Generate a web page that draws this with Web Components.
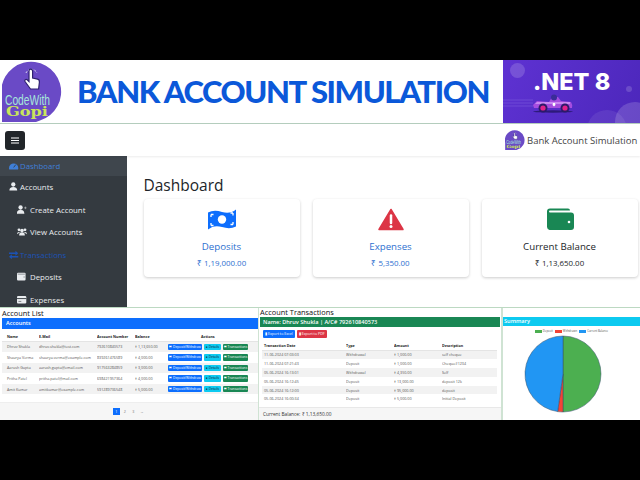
<!DOCTYPE html>
<html>
<head>
<meta charset="utf-8">
<title>Bank Account Simulation</title>
<style>
    html, body { margin: 0; background: #000; }
    body { width: 640px; height: 480px; overflow: hidden; font-family: "Open Sans", "Liberation Sans", sans-serif; }
    #page { display: flex; flex-direction: column; height: 480px; }
    .black { height: 60px; flex: none; background: #000; }
</style>
</head>
<body>
<div id="page">
    <div class="black"></div>
    <promo-banner></promo-banner>
    <app-shell>
        <top-bar slot="top"></top-bar>
        <side-menu slot="side"></side-menu>
        <dash-board slot="main"></dash-board>
    </app-shell>
    <bottom-strip>
        <account-list></account-list>
        <transaction-panel></transaction-panel>
        <summary-panel></summary-panel>
    </bottom-strip>
    <div class="black"></div>
</div>

<script>
const logoSvg = `
<svg viewBox="0 0 60 61" width="100%" height="100%" style="display:block">
    <path d="M0 38 A30 30 0 1 1 38 59.500 L34 61 H0 Z" fill="#6a4ac6"/>
    <path d="M24 12 a6 6 0 0 1 11 0" fill="none" stroke="#e6e6f2" stroke-width="1" stroke-dasharray="2 1.300"/>
    <path d="M27 10 a1.800 1.800 0 0 1 3.600 0 V17 l5 1.200 c1.600 .4 2 1.300 1.800 3 l-.8 6.800 H28.500 l-5.500 -7.500 c-1 -1.600 1 -2.800 2.200 -1.700 l1.800 1.700 Z" fill="#fff" stroke="#2f2170" stroke-width="1.200"/>
    <text x="25.500" y="44" text-anchor="middle" font-family="Liberation Sans, sans-serif" font-size="15" fill="#a6e6da" textLength="45" lengthAdjust="spacingAndGlyphs">CodeWith</text>
    <text x="25" y="54.500" text-anchor="middle" font-family="DejaVu Serif, serif" font-weight="700" font-size="13" fill="#c9e65a" textLength="42" lengthAdjust="spacingAndGlyphs">Gopi</text>
</svg>`

customElements.define('promo-banner',
class extends HTMLElement {
    constructor () {
        super()
        this.attachShadow({ mode: 'open' }).innerHTML = `
<style>
    :host { display: flex; flex: none; height: 64px; background: #fff; border-bottom: 1px solid #b4cdbd; box-sizing: border-box; overflow: hidden; }
    #logo { width: 60px; height: 61px; margin: 1px 0 0 2px; flex: none; }
    h1 { flex: 1; min-width: 0; margin: 0 0 0 15px; align-self: center; font: 900 31px/1 Lato, "Liberation Sans", sans-serif; color: #0b58d9; letter-spacing: -1.400px; white-space: nowrap; }
    #net { flex: none; width: 137px; background: linear-gradient(115deg, #5e32d2, #4c27bb); display: flex; flex-direction: column; align-items: flex-start; position: relative; overflow: hidden; }
    #net b { font: 800 23.500px/1 Inter, "Liberation Sans", sans-serif; color: #fff; margin: 10px 0 0 30px; position: relative; white-space: nowrap; }
    #net svg { margin: 0; position: relative; display: block; }
    .blob { position: absolute; border-radius: 50%; background: rgba(255,255,255,.16); }
</style>
<div id="logo">${logoSvg}</div>
<h1>BANK ACCOUNT SIMULATION</h1>
<div id="net">
    <span class="blob" style="left:7px;top:3px;width:15px;height:15px"></span>
    <span class="blob" style="left:112px;top:42px;width:40px;height:40px"></span>
    <span class="blob" style="left:84px;top:50px;width:40px;height:40px;background:rgba(255,255,255,.08)"></span>
    <span class="blob" style="left:123px;top:26px;width:6px;height:6px"></span>
    <b>.NET 8</b>
    <svg width="75" height="20" viewBox="0 0 75 20">
        <path d="M0 6h30M0 9h30M0 12h30" stroke="#8f6fe8" stroke-width=".6" opacity=".7"/>
        <ellipse cx="50" cy="17.500" rx="20" ry="1.200" fill="#2d1a7a"/>
        <path d="M30 11 L34 7 L46 8 L49 3 L55 3 L58 7 L68 8 Q70 11 69 14 H31 Z" fill="#a64de0"/>
        <path d="M34 8 H67 V10 H32 Z" fill="#c987f2"/>
        <circle cx="51" cy="3.500" r="3" fill="#3a2c98"/>
        <path d="M50 9l2 0 .5 2-1.500 1.500-1.500-1.500Z" fill="#fff"/>
        <circle cx="40" cy="14" r="4.500" fill="#2b1a6a"/><circle cx="40" cy="14" r="2.600" fill="#e0218a"/>
        <circle cx="62" cy="14" r="4.500" fill="#2b1a6a"/><circle cx="62" cy="14" r="2.600" fill="#e0218a"/>
    </svg>
</div>`
    }
})

customElements.define('app-shell',
class extends HTMLElement {
    constructor () {
        super()
        this.attachShadow({ mode: 'open' }).innerHTML = `
<style>
    :host { display: grid; flex: none; height: 183px; grid-template-columns: 127px 1fr; grid-template-rows: 32px 151px; background: #fff; overflow: hidden; }
    #top { grid-column: 1 / 3; position: relative; z-index: 1; }
</style>
<div id="top"><slot name="top"></slot></div>
<slot name="side"></slot>
<slot name="main"></slot>`
    }
})

customElements.define('top-bar',
class extends HTMLElement {
    constructor () {
        super()
        this.attachShadow({ mode: 'open' }).innerHTML = `
<style>
    :host { display: flex; height: 32px; align-items: center; justify-content: space-between; background: #fff; box-shadow: 0 1px 2px rgba(0,0,0,.08); padding: 0 0 0 5px; box-sizing: border-box; }
    button { width: 20px; height: 19px; border: 0; padding: 0; background: #212529; border-radius: 3px; display: flex; align-items: center; justify-content: center; }
    #brand { display: flex; align-items: center; gap: 2px; font-size: 9.500px; color: #444; white-space: nowrap; width: 135px; flex: none; }
    #mini { width: 20px; height: 20px; flex: none; }
</style>
<button aria-label="menu">
    <svg width="8" height="7" viewBox="0 0 8 7"><path d="M0 1h8M0 3.500h8M0 6h8" stroke="#fff" stroke-width="1.200"/></svg>
</button>
<div id="brand"><span id="mini">${logoSvg}</span><span>Bank Account Simulation</span></div>`
    }
})

const menuIcons = {
    gauge: '<path d="M0 10a6.500 6.500 0 1 1 13 0q0 1-.5 2H.5Q0 11 0 10Z"/><path d="M6.500 9 9.500 5" stroke="#343a40" stroke-width="1.200"/>',
    user: '<circle cx="6" cy="3.500" r="3"/><path d="M.5 12q0-5 5.500-5t5.500 5Z"/>',
    add: '<circle cx="5" cy="3.500" r="3"/><path d="M0 12q0-5 5-5t5 5ZM10 4h3.500M11.750 2.200v3.600" stroke="#fff" stroke-width=".6"/>',
    users: '<circle cx="2.800" cy="4" r="2"/><circle cx="11.200" cy="4" r="2"/><circle cx="7" cy="5" r="2.500"/><path d="M0 10q0-3 2.800-3 1 0 1.500.5M14 10q0-3-2.800-3-1 0-1.500.5M3 12q0-4.500 4-4.500t4 4.500Z"/>',
    swap: '<path d="M0 3.500h9V1l4 3.500-4 3.500V5.500H0ZM13 8.500H4V6L0 9.500 4 13v-2.500h9Z"/>',
    wallet: '<rect x="0" y="1" width="12" height="11" rx="1.500"/><path d="M1 3h10M9 7h2" stroke="#343a40" stroke-width=".7"/>',
    card: '<rect x="0" y="1.500" width="13" height="10.500" rx="1.500"/><path d="M0 5h13" stroke="#343a40" stroke-width="1.300"/><path d="M2 9h4" stroke="#343a40" stroke-width=".8"/>'
}

customElements.define('menu-item',
class extends HTMLElement {
    constructor () {
        super()
        const sub = this.hasAttribute('sub')
        this.attachShadow({ mode: 'open' }).innerHTML = `
<style>
    :host { display: flex; align-items: center; gap: ${sub ? 3 : 1}px; height: 22.500px; flex: none; padding-left: ${sub ? 17 : 9}px; color: #e9ecef; white-space: nowrap; }
    :host([active]) { background: #3f464d; color: #3f7fd8; height: 20px; }
    :host([dim]) { color: #1c52b5; }
    svg { width: 10px; height: 10px; fill: currentColor; flex: none; }
</style>
<svg viewBox="0 0 14 14">${menuIcons[this.getAttribute('icon')]}</svg><slot></slot>`
    }
})

customElements.define('side-menu',
class extends HTMLElement {
    constructor () {
        super()
        this.attachShadow({ mode: 'open' }).innerHTML = `
<style>
    :host { display: flex; flex-direction: column; background: #343a40; font-size: 7.800px; overflow: hidden; height: 151px; }
</style>
<menu-item active icon="gauge">Dashboard</menu-item>
<menu-item icon="user">Accounts</menu-item>
<menu-item sub icon="add">Create Account</menu-item>
<menu-item sub icon="users">View Accounts</menu-item>
<menu-item dim icon="swap">Transactions</menu-item>
<menu-item sub icon="wallet">Deposits</menu-item>
<menu-item sub icon="card">Expenses</menu-item>`
    }
})

customElements.define('stat-card',
class extends HTMLElement {
    constructor () {
        super()
        this.attachShadow({ mode: 'open' }).innerHTML = `
<style>
    :host { display: flex; flex-direction: column; align-items: center; height: 78px; background: #fff; border-radius: 4px; box-shadow: 0 1px 3px rgba(0,0,0,.2); color: var(--tone, #212529); box-sizing: border-box; padding-top: 9px; }
    ::slotted(svg) { display: block; width: 28px; height: 23px; }
    #name { font-size: 9.700px; font-weight: 500; line-height: 14px; margin-top: 9px; }
    #value { font-size: 7.900px; line-height: 12px; margin-top: 3px; }
</style>
<slot></slot>
<div id="name">${this.getAttribute('name')}</div>
<div id="value">${this.getAttribute('value')}</div>`
    }
})

customElements.define('dash-board',
class extends HTMLElement {
    constructor () {
        super()
        this.attachShadow({ mode: 'open' }).innerHTML = `
<style>
    :host { display: block; padding: 17px 2px 0 16.500px; background: #fff; }
    h2 { margin: 0 0 1px; font-size: 15.500px; font-weight: 400; line-height: 25px; color: #212529; }
    #cards { display: grid; grid-template-columns: repeat(3, 156px); gap: 13px; }
</style>
<h2>Dashboard</h2>
<div id="cards">
    <stat-card name="Deposits" value="₹ 1,19,000.00" style="--tone:#2d6fd0">
        <svg viewBox="0 0 28 23"><path d="M0 4.500Q6 1.500 14 4T28 1.500V18.500Q22 21.500 14 19T0 21.500Z" fill="#0d6efd"/><circle cx="14" cy="11.500" r="4.200" fill="#fff"/><path d="M3 6.500h2.500M3 6.500v2.500M25 5v2.500M25 5h-2.500M3 17.500v-2.500M3 17.500h2.500M25 16.500v-2.500M25 16.500h-2.500" stroke="#fff" stroke-width="1.300" fill="none"/></svg>
    </stat-card>
    <stat-card name="Expenses" value="₹ 5,350.00" style="--tone:#2d6fd0">
        <svg viewBox="0 0 28 23"><path d="M14 1.500 26 21.500H2Z" fill="#dc3545" stroke="#dc3545" stroke-width="1.500" stroke-linejoin="round"/><path d="M14 7.500v7.500" stroke="#fff" stroke-width="2.500" stroke-linecap="round"/><circle cx="14" cy="18.500" r="1.500" fill="#fff"/></svg>
    </stat-card>
    <stat-card name="Current Balance" value="₹ 1,13,650.00">
        <svg viewBox="0 0 28 23"><path d="M4 .500H22a2 2 0 0 1 2 2H4a1 1 0 0 0 0 2H25a3 3 0 0 1 3 3V19a3 3 0 0 1-3 3H3.500A3.500 3.500 0 0 1 1 19V3.500A3 3 0 0 1 4 .500Z" fill="#198754"/><circle cx="23" cy="14" r="1.300" fill="#fff"/></svg>
    </stat-card>
</div>`
    }
})

customElements.define('bottom-strip',
class extends HTMLElement {
    constructor () {
        super()
        this.attachShadow({ mode: 'open' }).innerHTML = `
<style>
    :host { display: grid; flex: none; height: 113px; grid-template-columns: 259px 243px 138px; background: #fff; border-top: 1px solid #bcd9c2; box-sizing: border-box; overflow: hidden; font-family: "Open Sans", "Liberation Sans", sans-serif; }
    ::slotted(*) { border-right: 1px solid #cfe3d3; box-sizing: border-box; }
</style>
<slot></slot>`
    }
})

const panelBase = `
    :host { display: flex; flex-direction: column; min-width: 0; overflow: hidden; color: #333; }
    h3 { margin: 0; font-size: 7.400px; line-height: 9px; font-weight: 400; color: #111; white-space: nowrap; }
    .head { color: #fff; font-weight: 600; white-space: nowrap; }
    table { border-collapse: collapse; table-layout: fixed; width: 100%; }
    th { font-weight: 700; color: #222; text-align: left; }
    td, th { padding: 0; white-space: nowrap; overflow: hidden; }
    tbody tr:nth-child(odd) { background: #f2f2f2; }
`

const accounts = [
    ['Dhruv Shukla', 'dhruv.shukla@test.com', '792610840573', '₹ 1,13,650.00'],
    ['Shaurya Verma', 'shaurya.verma@example.com', '839261476589', '₹ 4,000.00'],
    ['Aarush Gupta', 'aarush.gupta@email.com', '917563284859', '₹ 3,000.00'],
    ['Pritha Patel', 'pritha.patel@mail.com', '698421957364', '₹ 4,000.00'],
    ['Amit Kumar', 'amitkumar@example.com', '591289736548', '₹ 5,000.00']
]

customElements.define('account-list',
class extends HTMLElement {
    constructor () {
        super()
        const rows = accounts.map(a => `
    <tr><td>${a[0]}</td><td>${a[1]}</td><td>${a[2]}</td><td>${a[3]}</td>
    <td><div class="acts"><span class="btn" style="background:#0d6efd;width:34px">⇄ Deposit/Withdraw</span><span class="btn" style="background:#0dcaf0;width:17px;color:#123">● Details</span><span class="btn" style="background:#198754;width:25px">⇄ Transactions</span></div></td></tr>`).join('')
        this.attachShadow({ mode: 'open' }).innerHTML = `
<style>
    ${panelBase}
    h3 { padding-left: 2px; line-height: 10px; }
    .head { background: #0d6efd; margin-left: 2px; height: 11px; line-height: 11px; font-size: 5.600px; padding-left: 4px; }
    #wrap { padding: 3px 0 0 2px; }
    table { font-size: 3.700px; }
    th { height: 8.500px; border-bottom: 1px solid #e4e4e4; }
    td { height: 10.600px; color: #555; }
    th:first-child, td:first-child { padding-left: 5px; }
    .acts { display: flex; gap: 2px; }
    .btn { height: 6.500px; line-height: 6.500px; border-radius: 1px; color: #fff; text-align: center; font-size: 3.300px; overflow: hidden; white-space: nowrap; }
    #foot { margin-top: auto; background: #f6f6f6; height: 18px; display: flex; align-items: center; justify-content: center; gap: 1px; font-size: 3.700px; color: #777; border-top: 1px solid #eee; box-sizing: border-box; }
    #foot span { width: 7.500px; height: 7.500px; line-height: 7.500px; text-align: center; }
    #foot .on { background: #0d6efd; color: #fff; }
</style>
<h3>Account List</h3>
<div class="head">Accounts</div>
<div id="wrap">
    <table>
        <colgroup><col style="width:37px"><col style="width:58px"><col style="width:38px"><col style="width:33px"><col></colgroup>
        <thead><tr><th>Name</th><th>E-Mail</th><th>Account Number</th><th>Balance</th><th style="padding-left:33px">Actions</th></tr></thead>
        <tbody>${rows}</tbody>
    </table>
</div>
<div id="foot"><span class="on">1</span><span>2</span><span>3</span><span>→</span></div>`
    }
})

const txns = [
    ['11-06-2024 07:03:03', 'Withdrawal', '₹ 1,000.00', 'self cheque'],
    ['11-06-2024 07:21:43', 'Deposit', '₹ 1,000.00', 'Cheque#1234'],
    ['05-06-2024 16:13:01', 'Withdrawal', '₹ 4,350.00', 'Self'],
    ['05-06-2024 16:12:45', 'Deposit', '₹ 13,000.00', 'deposit 12k'],
    ['05-06-2024 16:12:00', 'Deposit', '₹ 95,000.00', 'deposit'],
    ['05-06-2024 16:00:34', 'Deposit', '₹ 5,000.00', 'Initial Deposit']
]

customElements.define('transaction-panel',
class extends HTMLElement {
    constructor () {
        super()
        const rows = txns.map(t => `<tr>${t.map(c => `<td>${c}</td>`).join('')}</tr>`).join('')
        this.attachShadow({ mode: 'open' }).innerHTML = `
<style>
    ${panelBase}
    h3 { padding-left: 1px; }
    .head { background: #198754; height: 10px; line-height: 10px; font-size: 5.600px; padding-left: 3px; margin: 0 1px 0 1px; }
    #bar { display: flex; gap: 2px; padding: 3px 0 0 4px; }
    #bar span { height: 8px; line-height: 8px; border-radius: 1px; color: #fff; font-size: 3.600px; padding: 0 2px; white-space: nowrap; }
    #wrap { padding: 3px 4px 0 3px; }
    table { font-size: 3.700px; }
    th { height: 8.500px; border-bottom: 1px solid #e4e4e4; }
    td { height: 8.800px; color: #555; }
    th:first-child, td:first-child { padding-left: 2px; }
    #foot { margin-top: auto; height: 12px; line-height: 12px; background: #f6f6f6; font-size: 4.800px; padding-left: 4px; color: #333; border-top: 1px solid #e8e8e8; white-space: nowrap; }
</style>
<h3>Account Transactions</h3>
<div class="head">Name: Dhruv Shukla | A/C# 792610840573</div>
<div id="bar">
    <span style="background:#0d6efd">▮ Export to Excel</span>
    <span style="background:#dc3545">▮ Export to PDF</span>
</div>
<div id="wrap">
    <table>
        <colgroup><col style="width:84px"><col style="width:48px"><col style="width:48px"><col></colgroup>
        <thead><tr><th>Transaction Date</th><th>Type</th><th>Amount</th><th>Description</th></tr></thead>
        <tbody>${rows}</tbody>
    </table>
</div>
<div id="foot">Current Balance: ₹ 1,13,650.00</div>`
    }
})

customElements.define('summary-panel',
class extends HTMLElement {
    constructor () {
        super()
        const slice = (from, to) => {
            const p = a => {
                const r = a * Math.PI / 180
                return `${(38 * Math.sin(r)).toFixed(2)} ${(-38 * Math.cos(r)).toFixed(2)}`
            }
            return `M0 0L${p(from)}A38 38 0 ${to - from > 180 ? 1 : 0} 1 ${p(to)}Z`
        }
        this.attachShadow({ mode: 'open' }).innerHTML = `
<style>
    ${panelBase}
    :host { border-right: 0 !important; border-left: 1px solid #cfe3d3; }
    .head { background: #0dcaf0; height: 9px; line-height: 9px; font-size: 5.600px; padding-left: 1px; margin-top: 9px; }
    #legend { display: flex; justify-content: center; gap: 2px; font-size: 2.800px; line-height: 6px; height: 6px; margin-top: 2px; color: #555; }
    #legend span { display: flex; align-items: center; gap: 1px; }
    #legend i { width: 7px; height: 3px; display: block; }
    svg { display: block; margin: 1px 0 0 21px; width: 78px; height: 78px; }
</style>
<div class="head">Summary</div>
<div id="legend">
    <span><i style="background:#4caf50"></i>Deposit</span>
    <span><i style="background:#f44336"></i>Withdrawn</span>
    <span><i style="background:#2196f3"></i>Current Balance</span>
</div>
<svg viewBox="-39 -39 78 78">
    <g stroke="#35506a" stroke-width=".5">
        <path d="${slice(0, 180)}" fill="#4caf50"/>
        <path d="${slice(180, 188.100)}" fill="#f44336"/>
        <path d="${slice(188.100, 360)}" fill="#2196f3"/>
    </g>
</svg>`
    }
})
</script>
</body>
</html>
